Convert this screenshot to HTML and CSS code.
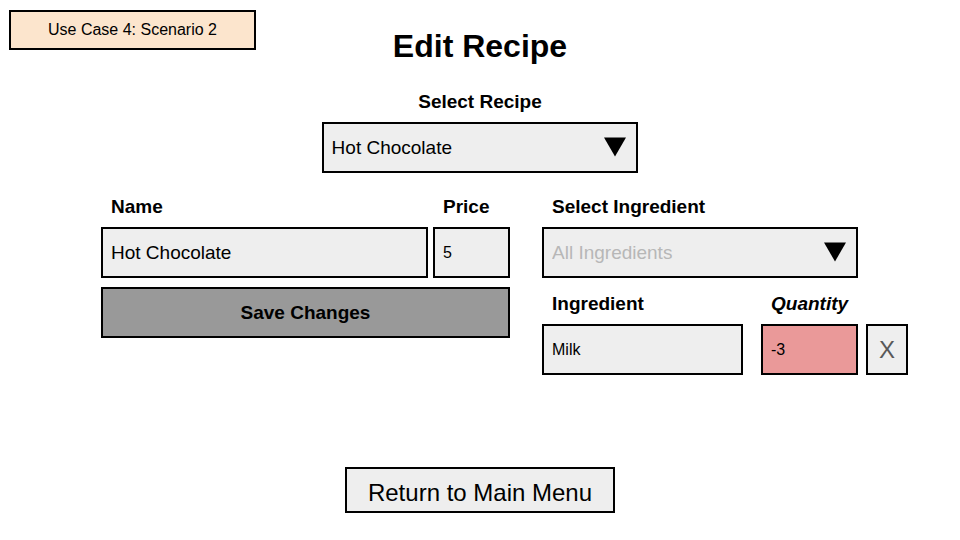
FILE: index.html
```html
<!DOCTYPE html>
<html lang="en">
<head>
<meta charset="utf-8">
<meta name="viewport" content="width=device-width, initial-scale=1">
<title>Edit Recipe</title>
<link rel="stylesheet" href="styles.css">
</head>
<body>
<header class="header">
  <div class="badge">Use Case 4: Scenario 2</div>
  <h1 class="title">Edit Recipe</h1>
</header>
<main>
  <div class="field recipe">
    <label class="label center" for="recipe">Select Recipe</label>
    <div class="picker">
      <select class="control" id="recipe"><option>Hot Chocolate</option></select>
      <svg class="arrow" viewBox="0 0 22 20" aria-hidden="true"><path d="M0 .5H22L11 19.5Z"/></svg>
    </div>
  </div>
  <div class="columns">
    <form class="details">
      <div class="field">
        <label class="label" for="name">Name</label>
        <input class="control" id="name" type="text" value="Hot Chocolate">
      </div>
      <div class="field">
        <label class="label" for="price">Price</label>
        <input class="control small" id="price" type="text" value="5">
      </div>
      <button class="control save" type="button">Save Changes</button>
    </form>
    <form class="ingredients">
      <div class="field wide">
        <label class="label" for="pick">Select Ingredient</label>
        <div class="picker">
          <select class="control muted" id="pick"><option>All Ingredients</option></select>
          <svg class="arrow" viewBox="0 0 22 20" aria-hidden="true"><path d="M0 .5H22L11 19.5Z"/></svg>
        </div>
      </div>
      <div class="field item">
        <label class="label" for="ingredient">Ingredient</label>
        <input class="control small" id="ingredient" type="text" value="Milk">
      </div>
      <div class="field amount">
        <label class="label italic" for="quantity">Quantity</label>
        <input class="control small invalid" id="quantity" type="text" value="-3">
      </div>
      <button class="control remove" type="button">X</button>
    </form>
  </div>
</main>
<footer class="footer">
  <button class="control return" type="button">Return to Main Menu</button>
</footer>
</body>
</html>
```
FILE: styles.css
```css
* {
  box-sizing: border-box;
}

body {
  margin: 0;
  min-height: 100vh;
  display: flex;
  flex-direction: column;
  background: #fff;
  color: #000;
  font-family: "Liberation Sans", Arial, sans-serif;
  font-size: 19px;
}

.header {
  display: grid;
  grid-template-columns: 1fr auto 1fr;
  align-items: start;
  padding: 10px 9px 0;
}

.badge {
  justify-self: start;
  padding: 8px 37px;
  border: 2px solid #000;
  background: #fce5cd;
  font-size: 16px;
  line-height: 20px;
}

.title {
  margin: 0;
  padding-top: 16px;
  font-size: 32px;
  line-height: 40px;
}

.field {
  display: flex;
  flex-direction: column;
  gap: 8px;
  min-width: 0;
}

.label {
  padding: 0 10px;
  font-weight: bold;
  line-height: 24px;
}

.center {
  text-align: center;
}

.italic {
  font-style: italic;
}

.control {
  width: 100%;
  height: 51px;
  margin: 0;
  padding: 0 8px;
  border: 2px solid #000;
  border-radius: 0;
  background: #eee;
  color: #000;
  font-family: inherit;
  font-size: 19px;
  appearance: none;
}

.small {
  font-size: 16px;
}

.muted {
  color: #b7b7b7;
}

.invalid {
  background: #ea9999;
}

.picker {
  position: relative;
}

.arrow {
  position: absolute;
  top: 15px;
  right: 12px;
  width: 22px;
  height: 20px;
  pointer-events: none;
}

.recipe {
  width: 33%;
  margin: 24px auto 0;
}

.columns {
  display: grid;
  grid-template-columns: 409fr 366fr;
  gap: 32px;
  align-items: start;
  padding: 22px 52px 0 101px;
}

.details {
  display: grid;
  grid-template-columns: 1fr 77px;
  gap: 9px 5px;
}

.save {
  grid-column: 1 / -1;
  background: #999;
  font-weight: bold;
}

.ingredients {
  display: grid;
  grid-template-columns: 1fr 97px 42px;
  column-gap: 8px;
  row-gap: 14px;
  align-items: end;
}

.wide {
  grid-column: 1 / 3;
}

.item {
  grid-column: 1;
  margin-right: 10px;
}

.remove {
  padding: 0;
  color: #595959;
  font-size: 24px;
}

.footer {
  display: flex;
  justify-content: center;
  margin-top: auto;
  padding: 24px 24px 27px;
}

.return {
  width: auto;
  height: 46px;
  padding: 5px 21px 0;
  font-size: 24px;
}
```
